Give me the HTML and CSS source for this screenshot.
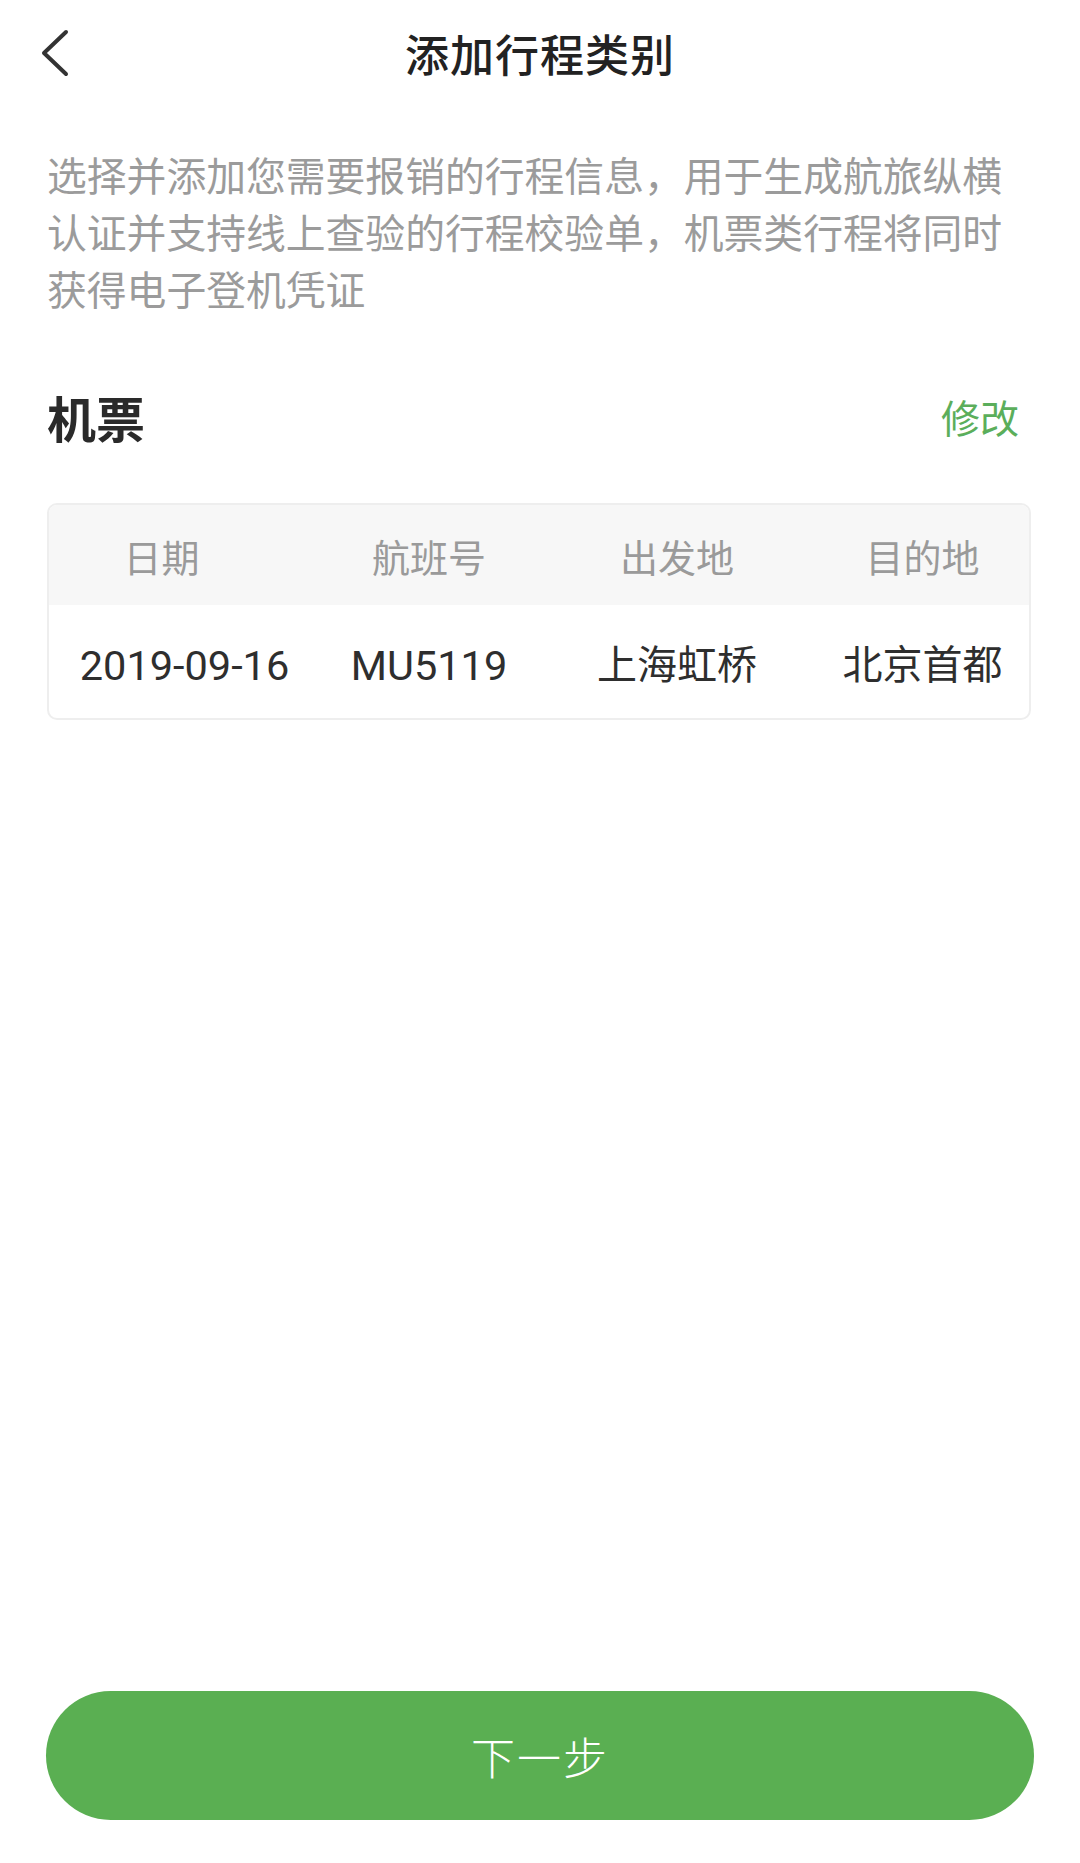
FILE: index.html
```html
<!DOCTYPE html>
<html lang="zh-CN">
<head>
    <meta charset="UTF-8">
    <meta name="viewport" content="width=device-width, initial-scale=1.0">
    <title>添加行程类别</title>
    <link rel="stylesheet" href="styles.css">
</head>
<body>
    <div class="page">
        <div class="nav-bar">
            <a class="back" href="#">
                <svg width="40" height="56" viewBox="0 0 40 56">
                    <polyline points="30,7 8,28 30,49" fill="none" stroke="#333" stroke-width="4" stroke-linecap="round" stroke-linejoin="round"/>
                </svg>
            </a>
            <h1>添加行程类别</h1>
            <span></span>
        </div>

        <p class="intro">选择并添加您需要报销的行程信息，用于生成航旅纵横认证并支持线上查验的行程校验单，机票类行程将同时获得电子登机凭证</p>

        <div class="section-head">
            <h2>机票</h2>
            <a class="edit" href="#">修改</a>
        </div>

        <div class="trip-table">
            <div class="trip-row head">
                <div class="cell first">日期</div>
                <div class="cell">航班号</div>
                <div class="cell">出发地</div>
                <div class="cell">目的地</div>
            </div>
            <div class="trip-row">
                <div class="cell latin">2019-09-16</div>
                <div class="cell latin">MU5119</div>
                <div class="cell">上海虹桥</div>
                <div class="cell">北京首都</div>
            </div>
        </div>

        <button class="next-btn">下一步</button>
    </div>
</body>
</html>
```

FILE: styles.css
```css
/* General Styling */
* {
    box-sizing: border-box;
}

body {
    margin: 0;
    padding: 0;
    background-color: #FFFFFF;
    color: #333333;
    font-family: Roboto, "Noto Sans CJK SC", sans-serif;
}

.page {
    display: flex;
    flex-direction: column;
    min-height: 1863px;
}

/* Top bar */
.nav-bar {
    display: grid;
    grid-template-columns: 1fr auto 1fr;
    align-items: center;
    height: 106px;
    padding: 0 36px;
}

.back {
    display: flex;
    align-items: center;
}

.nav-bar h1 {
    margin: 0;
    font-size: 44px;
    font-weight: 500;
    color: #222222;
    letter-spacing: 1px;
}

/* Intro text */
.intro {
    margin: 43px 44px 0 47px;
    font-size: 39.8px;
    line-height: 57px;
    color: #9B9B9B;
}

/* Section heading */
.section-head {
    display: flex;
    justify-content: space-between;
    align-items: center;
    height: 80px;
    margin-top: 56px;
    padding: 0 61px 0 47px;
}

.section-head h2 {
    margin: 0;
    font-size: 49px;
    font-weight: 700;
    color: #2A2A2A;
}

.edit {
    font-size: 39px;
    color: #5BAE5B;
    text-decoration: none;
}

/* Trip table */
.trip-table {
    margin: 47px 49px 0 47px;
    border: 2px solid #EEEEEE;
    border-radius: 10px;
    overflow: hidden;
}

.trip-row {
    display: grid;
    grid-template-columns: 271px 218px 278px 1fr;
    align-items: center;
    height: 113px;
    font-size: 40px;
    color: #2E2E2E;
}

.trip-row.head {
    height: 100px;
    background-color: #F7F7F7;
    font-size: 38px;
    color: #9A9A9A;
}

.cell {
    text-align: center;
    white-space: nowrap;
}

.cell.latin {
    padding-top: 7px;
    font-size: 41.5px;
}

.head .first {
    padding-right: 46px;
}

/* Bottom button */
.next-btn {
    margin: auto 46px 43px;
    height: 129px;
    border: none;
    border-radius: 65px;
    background-color: #5AAF52;
    color: #FFFFFF;
    font-family: "Noto Sans CJK SC", sans-serif;
    font-size: 44px;
    font-weight: 300;
    letter-spacing: 2px;
    cursor: pointer;
}
```
